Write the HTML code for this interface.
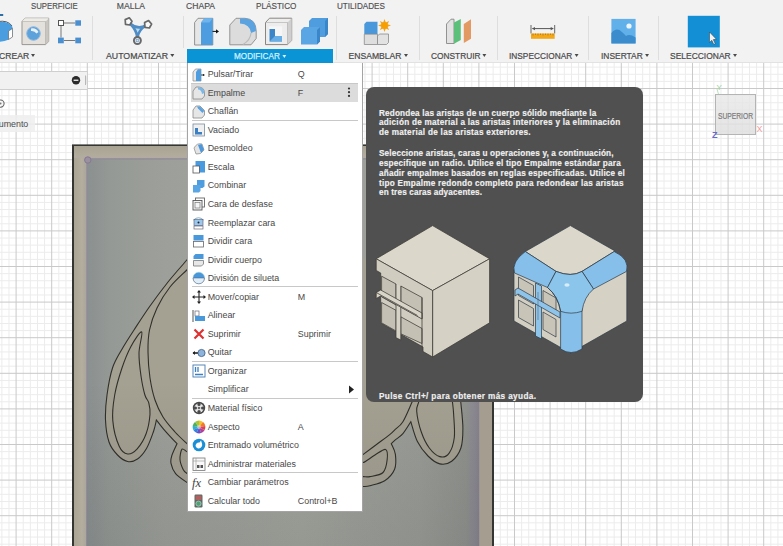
<!DOCTYPE html>
<html><head><meta charset="utf-8">
<style>
*{margin:0;padding:0;box-sizing:border-box}
html,body{width:783px;height:546px;overflow:hidden;background:#fff;font-family:"Liberation Sans",sans-serif}
.abs{position:absolute}
svg{position:absolute;overflow:visible}
#tb{position:absolute;left:0;top:0;width:783px;height:63px;background:#f2f2f2;border-bottom:1px solid #e2e2e2}
.tab{position:absolute;top:1.5px;font-size:8.6px;color:#505050;-webkit-text-stroke:.15px #505050;line-height:9px;white-space:nowrap}
.lbl{position:absolute;top:51.5px;font-size:8.6px;color:#4a4a4a;-webkit-text-stroke:.2px #4a4a4a;line-height:9px;white-space:nowrap}
.dd{display:inline-block;width:0;height:0;border-left:2.6px solid transparent;border-right:2.6px solid transparent;border-top:3.8px solid currentColor;margin-left:2.4px;vertical-align:1.4px}
.sep{position:absolute;top:16px;width:1px;height:44px;background:#dedede}
#mbar{position:absolute;left:187px;top:48.6px;width:146px;height:14.4px;background:#0a94d6}
#menu{position:absolute;left:187px;top:63px;width:176px;height:449px;background:#fff;border:1px solid #a4a4a4;border-top:none}
.row{position:absolute;left:0;width:173px;height:18.54px;font-size:8.9px;color:#484848;white-space:nowrap}
.row .t{position:absolute;left:19.7px;top:4.75px;line-height:10px}
.row .k{position:absolute;left:109.8px;top:4.75px;line-height:10px}
.row .i{position:absolute;left:4px;top:3px;width:13px;height:13px}
.msep{position:absolute;left:4px;width:166px;height:1px;background:#c8c8c8}
#tip{position:absolute;left:366.3px;top:87.3px;width:277px;height:314.5px;background:#505050;border-radius:8px}
.tl{position:absolute;left:12.7px;font-size:8.2px;font-weight:bold;color:#f0f0f0;-webkit-text-stroke:.15px #f0f0f0;white-space:nowrap;line-height:10px}
</style></head><body>
<svg width="783" height="546" style="left:0;top:0">
<path d="M1.86 0V546M8.98 0V546M23.22 0V546M30.34 0V546M37.46 0V546M44.58 0V546M58.82 0V546M65.94 0V546M73.06 0V546M80.18 0V546M94.42 0V546M101.54 0V546M108.66 0V546M115.78 0V546M130.02 0V546M137.14 0V546M144.26 0V546M151.38 0V546M165.62 0V546M172.74 0V546M179.86 0V546M186.98 0V546M201.22 0V546M208.34 0V546M215.46 0V546M222.58 0V546M236.82 0V546M243.94 0V546M251.06 0V546M258.18 0V546M272.42 0V546M279.54 0V546M286.66 0V546M293.78 0V546M308.02 0V546M315.14 0V546M322.26 0V546M329.38 0V546M343.62 0V546M350.74 0V546M357.86 0V546M364.98 0V546M379.22 0V546M386.34 0V546M393.46 0V546M400.58 0V546M414.82 0V546M421.94 0V546M429.06 0V546M436.18 0V546M450.42 0V546M457.54 0V546M464.66 0V546M471.78 0V546M486.02 0V546M493.14 0V546M500.26 0V546M507.38 0V546M521.62 0V546M528.74 0V546M535.86 0V546M542.98 0V546M557.22 0V546M564.34 0V546M571.46 0V546M578.58 0V546M592.82 0V546M599.94 0V546M607.06 0V546M614.18 0V546M628.42 0V546M635.54 0V546M642.66 0V546M649.78 0V546M664.02 0V546M671.14 0V546M678.26 0V546M685.38 0V546M699.62 0V546M706.74 0V546M713.86 0V546M720.98 0V546M735.22 0V546M742.34 0V546M749.46 0V546M756.58 0V546M770.82 0V546M777.94 0V546M785.06 0V546M0 3.06H783M0 10.18H783M0 24.42H783M0 31.54H783M0 38.66H783M0 45.78H783M0 60.02H783M0 67.14H783M0 74.26H783M0 81.38H783M0 95.62H783M0 102.74H783M0 109.86H783M0 116.98H783M0 131.22H783M0 138.34H783M0 145.46H783M0 152.58H783M0 166.82H783M0 173.94H783M0 181.06H783M0 188.18H783M0 202.42H783M0 209.54H783M0 216.66H783M0 223.78H783M0 238.02H783M0 245.14H783M0 252.26H783M0 259.38H783M0 273.62H783M0 280.74H783M0 287.86H783M0 294.98H783M0 309.22H783M0 316.34H783M0 323.46H783M0 330.58H783M0 344.82H783M0 351.94H783M0 359.06H783M0 366.18H783M0 380.42H783M0 387.54H783M0 394.66H783M0 401.78H783M0 416.02H783M0 423.14H783M0 430.26H783M0 437.38H783M0 451.62H783M0 458.74H783M0 465.86H783M0 472.98H783M0 487.22H783M0 494.34H783M0 501.46H783M0 508.58H783M0 522.82H783M0 529.94H783M0 537.06H783M0 544.18H783" stroke="#ececec" stroke-width="1"/>
<path d="M16.1 0V546M51.7 0V546M87.3 0V546M122.9 0V546M158.5 0V546M194.1 0V546M229.7 0V546M265.3 0V546M300.9 0V546M336.5 0V546M372.1 0V546M407.7 0V546M443.3 0V546M478.9 0V546M514.5 0V546M550.1 0V546M585.7 0V546M621.3 0V546M656.9 0V546M692.5 0V546M728.1 0V546M763.7 0V546M0 17.3H783M0 52.9H783M0 88.5H783M0 124.1H783M0 159.7H783M0 195.3H783M0 230.9H783M0 266.5H783M0 302.1H783M0 337.7H783M0 373.3H783M0 408.9H783M0 444.5H783M0 480.1H783M0 515.7H783" stroke="#c9c9c9" stroke-width="1"/>
</svg>
<!-- block -->
<svg width="783" height="546" style="left:0;top:0">
<defs>
 <linearGradient id="fh" x1="86" y1="0" x2="480" y2="0" gradientUnits="userSpaceOnUse">
  <stop offset="0" stop-color="#8a8f90"/>
  <stop offset=".06" stop-color="#959995"/>
  <stop offset=".2" stop-color="#9da09a"/>
  <stop offset=".55" stop-color="#a2a59d"/>
  <stop offset=".85" stop-color="#999c96"/>
  <stop offset=".965" stop-color="#8f928d"/>
  <stop offset=".982" stop-color="#8c8a91"/>
  <stop offset="1" stop-color="#85818e"/>
 </linearGradient>
 <linearGradient id="fl" x1="74" y1="0" x2="87" y2="0" gradientUnits="userSpaceOnUse">
  <stop offset="0" stop-color="#a9a494"/><stop offset=".6" stop-color="#b3ae9e"/><stop offset="1" stop-color="#aaa49c"/>
 </linearGradient>
 <linearGradient id="ft" x1="0" y1="146" x2="0" y2="159" gradientUnits="userSpaceOnUse">
  <stop offset="0" stop-color="#a8a392"/><stop offset=".7" stop-color="#b0ab9b"/><stop offset="1" stop-color="#b4aaa6"/>
 </linearGradient>
</defs>
<rect x="72" y="144.4" width="422" height="410" fill="#353532"/>
<rect x="74" y="146" width="418" height="410" fill="url(#ft)"/>
<rect x="74" y="158" width="13" height="400" fill="url(#fl)"/>
<rect x="479.3" y="158" width="12.7" height="400" fill="#a69d91"/>
<rect x="86.3" y="158.2" width="393" height="400" fill="#8f8c97"/>
<rect x="87.6" y="159.6" width="391.5" height="400" fill="url(#fh)"/>
<circle cx="87.8" cy="160" r="3.2" fill="#9a90a0" stroke="#857a92" stroke-width="1"/>
</svg>
<!--BLOCKSVG-->
<svg width="783" height="546" style="left:0;top:0">
<defs><clipPath id="face"><rect x="86.6" y="159" width="392.7" height="400"/></clipPath></defs>
<g clip-path="url(#face)">
<path d="M192.0 253.0C191.1 254.2 190.8 255.2 186.8 260.0C182.8 264.8 174.1 274.3 168.0 282.0C161.9 289.7 155.7 298.0 150.0 306.0C144.3 314.0 138.7 322.8 134.0 330.0C129.3 337.2 125.4 343.2 121.8 349.5C118.2 355.8 115.0 360.4 112.5 368.0C110.0 375.6 108.2 386.3 107.0 395.0C105.8 403.7 105.2 412.2 105.5 420.0C105.8 427.8 107.0 436.2 109.0 442.0C111.0 447.8 114.4 451.8 117.5 455.0C120.6 458.2 124.3 460.8 127.6 461.5C130.9 462.2 134.3 461.2 137.5 459.0C140.7 456.8 143.8 453.1 146.5 448.5C149.2 443.9 151.8 436.2 153.5 431.5C155.2 426.8 155.9 421.9 156.4 420.0C157.7 421.6 160.6 425.7 164.0 429.6C167.4 433.6 174.8 441.4 177.0 443.7C176.1 445.7 172.8 452.3 171.8 455.6C170.8 458.9 170.4 460.3 171.0 463.3C171.6 466.3 172.9 470.4 175.6 473.6C178.3 476.8 184.5 480.7 187.2 482.6C189.9 484.5 191.2 484.6 192.0 485.0L300 495 L358 487C358.9 486.9 361.3 486.7 363.3 486.5C365.3 486.3 366.3 486.7 369.9 485.7C373.5 484.7 380.6 483.4 384.7 480.7C388.8 477.9 392.8 473.6 394.6 469.2C396.4 464.8 395.9 458.6 395.4 454.4C394.8 450.1 392.0 445.5 391.3 443.7C391.9 443.1 393.1 441.9 395.0 440.2C396.9 438.5 400.3 436.7 402.9 433.6C405.5 430.5 409.5 423.7 410.8 421.7C411.9 425.0 414.5 435.8 417.4 441.5C420.3 447.2 424.3 452.3 428.0 456.0C431.7 459.7 435.9 463.0 439.8 463.9C443.8 464.8 448.2 463.8 451.7 461.2C455.2 458.6 459.0 453.5 460.9 448.0C462.8 442.5 462.9 435.8 462.9 428.3C462.9 420.9 461.4 408.7 460.9 403.3C460.4 397.9 460.1 397.2 460.0 396.0L460 300 L300 230 L200 240Z" fill="#a4a092"/>
<g fill="none" stroke="#30302b" stroke-width="1.1">
<path d="M192.0 253.0C191.1 254.2 190.8 255.2 186.8 260.0C182.8 264.8 174.1 274.3 168.0 282.0C161.9 289.7 155.7 298.0 150.0 306.0C144.3 314.0 138.7 322.8 134.0 330.0C129.3 337.2 125.4 343.2 121.8 349.5C118.2 355.8 115.0 360.4 112.5 368.0C110.0 375.6 108.2 386.3 107.0 395.0C105.8 403.7 105.2 412.2 105.5 420.0C105.8 427.8 107.0 436.2 109.0 442.0C111.0 447.8 114.4 451.8 117.5 455.0C120.6 458.2 124.3 460.8 127.6 461.5C130.9 462.2 134.3 461.2 137.5 459.0C140.7 456.8 143.8 453.1 146.5 448.5C149.2 443.9 151.8 436.2 153.5 431.5C155.2 426.8 155.9 421.9 156.4 420.0C157.7 421.6 160.6 425.7 164.0 429.6C167.4 433.6 174.8 441.4 177.0 443.7C176.1 445.7 172.8 452.3 171.8 455.6C170.8 458.9 170.4 460.3 171.0 463.3C171.6 466.3 172.9 470.4 175.6 473.6C178.3 476.8 184.5 480.7 187.2 482.6C189.9 484.5 191.2 484.6 192.0 485.0"/>
<path d="M192.0 265.0C191.1 265.8 190.5 266.3 186.8 270.0C183.1 273.7 175.0 280.7 170.0 287.0C165.0 293.3 160.4 300.8 157.0 308.0C153.6 315.2 151.0 322.7 149.5 330.0C148.0 337.3 147.9 344.0 148.0 352.0C148.1 360.0 148.8 370.0 150.0 378.0C151.2 386.0 152.8 393.5 155.0 400.0C157.2 406.5 159.7 411.7 163.0 417.0C166.3 422.3 170.8 427.3 175.0 432.0C179.2 436.7 185.7 442.3 188.5 445.0C191.3 447.7 191.4 447.5 192.0 448.0"/>
<path d="M141.7 332.0C140.3 330.9 134.1 340.6 130.8 346.7C127.5 352.8 124.5 360.4 121.8 368.5C119.1 376.6 116.2 386.3 114.7 395.0C113.2 403.7 112.0 412.1 112.8 420.6C113.5 429.2 116.7 440.7 119.2 446.3C121.7 451.9 124.6 453.6 127.6 454.0C130.6 454.4 134.1 452.2 137.2 448.8C140.3 445.4 144.1 439.3 146.2 433.5C148.3 427.7 149.6 419.3 150.0 414.2C150.4 409.1 149.5 405.9 148.7 402.7C147.8 399.5 146.2 399.4 144.9 395.0C143.6 390.6 142.0 383.0 141.0 376.0C140.0 369.0 138.9 360.3 139.0 353.0C139.1 345.7 143.1 333.1 141.7 332.0Z"/>
<path d="M192.0 452.5C191.2 452.4 188.9 452.4 187.2 451.8C185.5 451.2 183.2 447.9 182.0 449.2C180.8 450.5 179.8 456.1 180.0 459.5C180.2 462.9 182.1 467.3 183.3 469.7C184.5 472.1 185.8 472.7 187.2 473.6C188.6 474.5 191.2 474.8 192.0 475.0"/>
<path d="M414.0 398.0C413.7 398.7 414.0 398.1 412.1 402.0C410.2 405.9 405.8 417.1 402.9 421.7C400.0 426.3 397.2 427.5 395.0 429.6C392.8 431.8 392.8 432.1 389.7 434.6C386.6 437.1 380.9 441.2 376.5 444.5C372.1 447.8 366.4 452.1 363.3 454.4C360.2 456.6 358.9 457.4 358.0 458.0"/>
<path d="M358.0 487.0C358.9 486.9 361.3 486.7 363.3 486.5C365.3 486.3 366.3 486.7 369.9 485.7C373.5 484.7 380.6 483.4 384.7 480.7C388.8 477.9 392.8 473.6 394.6 469.2C396.4 464.8 395.9 458.6 395.4 454.4C394.8 450.1 392.0 445.5 391.3 443.7C391.9 443.1 393.1 441.9 395.0 440.2C396.9 438.5 400.3 436.7 402.9 433.6C405.5 430.5 409.5 423.7 410.8 421.7C411.9 425.0 414.5 435.8 417.4 441.5C420.3 447.2 424.3 452.3 428.0 456.0C431.7 459.7 435.9 463.0 439.8 463.9C443.8 464.8 448.2 463.8 451.7 461.2C455.2 458.6 459.0 453.5 460.9 448.0C462.8 442.5 462.9 435.8 462.9 428.3C462.9 420.9 461.4 408.7 460.9 403.3C460.4 397.9 460.1 397.2 460.0 396.0"/>
<path d="M358.0 462.0C358.9 462.1 360.5 463.8 363.3 462.6C366.1 461.4 371.3 457.2 375.0 455.0C378.7 452.8 383.5 448.7 385.5 449.4C387.5 450.1 387.6 455.4 387.2 459.3C386.8 463.2 385.9 469.6 383.0 472.5C380.1 475.4 373.2 475.9 369.9 476.6C366.6 477.3 365.3 476.6 363.3 476.6C361.3 476.6 358.9 476.6 358.0 476.6"/>
<path d="M418.7 398.0C418.7 398.7 419.0 399.8 418.7 402.0C418.4 404.2 416.2 406.1 416.7 411.2C417.1 416.2 419.3 426.2 421.4 432.3C423.5 438.4 426.2 443.9 429.3 448.0C432.4 452.1 436.5 455.7 439.8 456.6C443.1 457.5 446.6 456.5 449.0 453.3C451.4 450.1 453.5 444.1 454.3 437.5C455.1 430.9 453.9 419.9 453.6 413.8C453.3 407.7 452.6 403.6 452.3 400.6C452.0 397.6 452.1 396.8 452.0 396.0"/>
</g></g></svg>
<svg width="783" height="546" style="left:0;top:0"><defs><linearGradient id="vg" x1="0" y1="380" x2="0" y2="546" gradientUnits="userSpaceOnUse"><stop offset="0" stop-color="#000" stop-opacity="0"/><stop offset="1" stop-color="#1a1f22" stop-opacity=".09"/></linearGradient></defs><rect x="86.3" y="380" width="393" height="166" fill="url(#vg)"/></svg>
<!--/BLOCKSVG-->


<!-- left browser panel -->
<div class="abs" style="left:-2px;top:70.5px;width:90px;height:19.5px;background:#f1f1f1;border:1px solid #cfcfcf"></div>
<svg width="100" height="60" style="left:0;top:70">
 <circle cx="76" cy="10.2" r="4.2" fill="#2a2a2a"/>
 <rect x="73.6" y="9.6" width="4.8" height="1.3" fill="#f1f1f1"/>
 <path d="M85.5 5.5 V15" stroke="#aaa" stroke-width=".8"/>
 <path d="M87 6.5 V14" stroke="#ccc" stroke-width=".6"/>
 <circle cx="0.5" cy="33.6" r="3.6" fill="none" stroke="#666" stroke-width="1.1"/>
 <circle cx="0.5" cy="33.6" r="1" fill="#777"/>
</svg>
<div class="abs" style="left:0;top:115px;width:35px;height:17px;background:rgba(238,238,238,.85)"></div>
<div class="abs" style="left:-1.3px;top:118.8px;font-size:8.9px;line-height:10px;color:#4c4c4c;white-space:nowrap">umento</div>
<!-- view cube -->
<div class="abs" style="left:715.4px;top:94.2px;width:40.4px;height:40.4px;background:linear-gradient(rgba(232,232,232,.82),rgba(222,222,222,.82));border:1.5px solid #b4b4b4"></div>
<div class="abs" style="left:718.4px;top:110.8px;font-size:8.6px;line-height:10px;color:#7c7c7c;-webkit-text-stroke:.2px #7c7c7c;white-space:nowrap;transform:scaleX(.78);transform-origin:0 0">SUPERIOR</div>
<svg width="70" height="60" style="left:705;top:80">
 <path d="M12 9 L13.5 14.2" stroke="#a8dca8" stroke-width=".8"/>
 <text x="11.5" y="9.5" font-size="8" fill="#9ad49a" font-family="Liberation Sans">Y</text>
 <text x="7" y="58" font-size="9" font-weight="bold" fill="#6a6ac8" font-family="Liberation Sans">Z</text>
 <text x="51.5" y="52" font-size="9" fill="#f0a0a0" font-family="Liberation Sans">X</text>
</svg>
<div id="tb">
<div class="tab" style="left:30.8px;transform:scaleX(.906);transform-origin:0 0">SUPERFICIE</div>
<div class="tab" style="left:116.8px">MALLA</div>
<div class="tab" style="left:186px">CHAPA</div>
<div class="tab" style="left:255.5px;transform:scaleX(.95);transform-origin:0 0">PLÁSTICO</div>
<div class="tab" style="left:336.7px;transform:scaleX(.946);transform-origin:0 0">UTILIDADES</div>
<div class="sep" style="left:92px"></div>
<div class="sep" style="left:183px;height:32px"></div>
<div class="sep" style="left:336px"></div>
<div class="sep" style="left:419px"></div>
<div class="sep" style="left:497px"></div>
<div class="sep" style="left:588px"></div>
<div class="sep" style="left:658px"></div>
<div class="lbl" style="left:-1px">CREAR<i class="dd"></i></div>
<div class="lbl" style="left:105.9px;transform:scaleX(1.02);transform-origin:0 0">AUTOMATIZAR<i class="dd"></i></div>
<div class="lbl" style="left:348.5px">ENSAMBLAR<i class="dd"></i></div>
<div class="lbl" style="left:430.6px;transform:scaleX(.97);transform-origin:0 0">CONSTRUIR<i class="dd"></i></div>
<div class="lbl" style="left:509px;transform:scaleX(.966);transform-origin:0 0">INSPECCIONAR<i class="dd"></i></div>
<div class="lbl" style="left:601px;transform:scaleX(.98);transform-origin:0 0">INSERTAR<i class="dd"></i></div>
<div class="lbl" style="left:670px;transform:scaleX(.985);transform-origin:0 0">SELECCIONAR<i class="dd"></i></div>
</div>

<!-- toolbar icons -->
<svg width="783" height="63" style="left:0;top:0">
 <!-- crear partial: cylinder -->
 <path d="M0 15h3.2" stroke="#2f6fa8" stroke-width="2"/>
 <path d="M-2 21.5 Q8 20 12 26" stroke="#555" stroke-width="1" fill="none"/>
 <path d="M-2 22 Q9 21 12.5 27 V36 Q10 41 -2 42 Z" fill="#4a9ee0"/>
 <path d="M8.5 31 L12.5 28.5 V37 L8.5 39.5 Z" fill="#fff" stroke="#555" stroke-width=".6"/>
 <!-- hole cube -->
 <path d="M22 21.5 L25 18.2 H48.7 V41.5 L45.5 44.6 H22 Z" fill="#e4e1dc" stroke="#9a9590" stroke-width="1"/>
 <path d="M45.5 21.5 L48.7 18.2 V41.5 L45.5 44.6 Z" fill="#c9c6c1"/>
 <path d="M22 21.5 L25 18.2 H48.7 L45.5 21.5 Z" fill="#eeece8"/>
 <path d="M22 21.5 H45.5 V44.6" stroke="#b0aca6" stroke-width=".6" fill="none"/>
 <circle cx="33.5" cy="33.5" r="6.8" fill="#5ea2dc" stroke="#8fb8dc" stroke-width="1"/>
 <path d="M31 28.5 Q36 27.5 38.5 32 L36.5 33.5 Q34.5 30.5 31 31 Z" fill="#e8f1f8"/>
 <!-- sketch -->
 <path d="M64 23 H75.3 M61 25.5 V37.6 M64 40.5 H75.3" stroke="#777" stroke-width="1"/>
 <rect x="58.5" y="20.5" width="5" height="5" fill="#fff" stroke="#555" stroke-width="1"/>
 <rect x="75.3" y="20.3" width="5.7" height="5.4" fill="#4a90d0"/>
 <rect x="58" y="37.6" width="5.8" height="5.7" fill="#4a90d0"/>
 <rect x="75.3" y="37.6" width="5.7" height="5.7" fill="#4a90d0"/>
 <!-- automatizar -->
 <path d="M130 23.5 Q137.5 30 146 25.5 Q138.5 30 137.4 37.5 Q136.5 30 130 23.5 Z" fill="#b9dcf5" stroke="#4f8cc4" stroke-width="2.6" stroke-linejoin="round"/>
 <path d="M125.2 19.6 L129.3 17.8 L132 21.2 L129.8 25 L125.5 24.4 Z" fill="#fafafa" stroke="#686868" stroke-width="1.7" stroke-linejoin="round"/>
 <path d="M144.6 22.6 L148.6 20.6 L151.6 24 L149.4 28 L145 27.4 Z" fill="#fafafa" stroke="#686868" stroke-width="1.7" stroke-linejoin="round"/>
 <circle cx="137.4" cy="40.5" r="3.5" fill="#d3e4f3" stroke="#686868" stroke-width="1.9"/>
 <rect x="136.2" y="39.3" width="2.4" height="2.4" fill="none" stroke="#7a9ab8" stroke-width=".6"/>
 <!-- push pull -->
 <path d="M194.6 22.5 L198 18.3 H212.8 V45 H194.6 Z" fill="#e6e6e6" stroke="#888" stroke-width=".9"/>
 <path d="M201 22.5 L204.5 18.3 H212.8 V45 H201 Z" fill="#4d9de0"/>
 <path d="M201 22.5 L204.5 18.3 H212.8 L209.5 22.5Z" fill="#6fb4ea"/>
 <path d="M212.5 31.4 H217" stroke="#111" stroke-width="1"/>
 <path d="M216 29.2 L219 31.4 L216 33.6 Z" fill="#111"/>
 <!-- fillet -->
 <path d="M229.8 25 L236 18.3 H245 Q256 19 256.2 31 V38.5 L251 44.8 H229.8 Z" fill="#dcdcdc" stroke="#8a8a8a" stroke-width=".9"/>
 <path d="M240 18.6 H245 Q256 19 256 31 L251 33 Q250 24 240 23.5 Z" fill="#5aa3e0"/>
 <path d="M251 33 Q250.5 40 243 44.5" stroke="#bbb" stroke-width="1.2" fill="none"/>
 <!-- shell -->
 <path d="M265.5 22.5 L269.5 18.2 H291.7 V40.5 L287.5 44.6 H265.5 Z" fill="#ededed" stroke="#8a8580" stroke-width="1"/>
 <path d="M287.5 22.5 L291.7 18.2 V40.5 L287.5 44.6 Z" fill="#cfcfcf"/>
 <path d="M265.5 22.5 H287.5 V44.6" stroke="#aaa" stroke-width=".6" fill="none"/>
 <rect x="268.7" y="26.3" width="13.5" height="15.5" fill="#f6f6f6"/>
 <path d="M269.5 29 H275 V36 H282 V41.5 H269.5 Z" fill="#3c86c8"/>
 <path d="M275 36 H282 V41.5 H269.5 Z" fill="#68aee6"/>
 <!-- combine -->
 <path d="M309 21 L312 18 H328 V34 L325 37 H309 Z" fill="#4f9ddf"/>
 <path d="M325 21 L328 18 V34 L325 37 Z" fill="#3a86c8"/>
 <path d="M301 30 L304 27 H320 V41.6 L317 44.6 H301 Z" fill="#5aa6e4"/>
 <path d="M317 30 L320 27 V41.6 L317 44.6 Z" fill="#3a86c8"/>
 <!-- ensamblar -->
 <path d="M364.3 24 L366.5 21.8 H377.5 V34.2 H364.3 Z" fill="#4a98dc"/>
 <path d="M364.3 34.2 H377.5 V44.5 H364.3 Z" fill="#dedede" stroke="#8a8a8a" stroke-width=".8"/>
 <path d="M377.5 36 L379.5 34 H388.5 V42.5 L386.5 44.5 H377.5 Z" fill="#e2e2e2" stroke="#8a8a8a" stroke-width=".8"/>
 <g transform="translate(384.5 25.5)">
  <path d="M0 -6.5 L1.3 -3 L4.6 -4.6 L3 -1.3 L6.5 0 L3 1.3 L4.6 4.6 L1.3 3 L0 6.5 L-1.3 3 L-4.6 4.6 L-3 1.3 L-6.5 0 L-3 -1.3 L-4.6 -4.6 L-1.3 -3 Z" fill="#f3a21a"/>
  <circle r="3.2" fill="#f5a000"/>
 </g>
 <!-- construir -->
 <path d="M446.5 24 L451 19.2 H454 V43.5 H446.5 Z" fill="#e2e2e2" stroke="#888" stroke-width=".9"/>
 <path d="M454 22.5 L460.8 19 V40 L454 43.7 Z" fill="#5cc07a"/>
 <path d="M463.8 24 L471 19.2 V38.8 L463.8 43 Z" fill="#e39a62"/>
 <!-- inspeccionar -->
 <path d="M531 25 V33.5 M554.7 25 V33.5" stroke="#666" stroke-width="1"/>
 <path d="M532.5 28.6 H553.2" stroke="#555" stroke-width="1"/>
 <path d="M532 28.6 L535 27 V30.2 Z M553.7 28.6 L550.7 27 V30.2 Z" fill="#555"/>
 <rect x="531" y="33.5" width="23.7" height="5.3" fill="#f2a818"/>
 <path d="M533 33.5 V35.5 M535.5 33.5 V35 M538 33.5 V35.5 M540.5 33.5 V35 M543 33.5 V35.5 M545.5 33.5 V35 M548 33.5 V35.5 M550.5 33.5 V35 M553 33.5 V35.5" stroke="#b07010" stroke-width=".7"/>
 <!-- insertar -->
 <rect x="611.4" y="18.9" width="24.2" height="24.5" fill="#62b0ea"/>
 <path d="M611.4 43.4 V33 Q615 28 619.5 30 Q623.5 33 626 36 Q629.5 33.5 635.6 37.5 V43.4 Z" fill="#3a8ccd"/>
 <circle cx="629" cy="26" r="2.6" fill="#eef6fc"/>
 <!-- seleccionar -->
 <rect x="687.8" y="15.8" width="32" height="31.6" fill="#138fd5"/>
 <path d="M709.5 32 V42.5 L711.8 40.3 L713.8 44.5 L715.3 43.8 L713.3 39.6 L716.4 39.3 Z" fill="#f2f2f2" stroke="#333" stroke-width=".5"/>
</svg>
<div id="mbar"><div class="lbl" style="left:46.5px;top:3.5px;color:#d4f0fc;-webkit-text-stroke:.25px #d4f0fc;transform:scaleX(.95);transform-origin:0 0">MODIFICAR<i class="dd"></i></div></div>
<div id="menu">
<div class="abs" style="left:3px;top:19.9px;width:167px;height:19.2px;background:#dcdcdc;border-top:1px solid #c8c8c8"></div>
<div class="row" style="top:1.50px"><svg class="i" width="14" height="14" style="left:3.5px;top:3px"><path d="M1 4 L3.5 1 H9 V13 H1 Z" fill="#e8e8e8" stroke="#888" stroke-width=".7"/><path d="M4 4 L6 1.2 H9 V13 H4 Z" fill="#4d9de0"/><path d="M9 7 H11.5" stroke="#222" stroke-width=".8"/><circle cx="11.6" cy="7" r=".9" fill="#222"/></svg><span class="t">Pulsar/Tirar</span><span class="k">Q</span></div>
<div class="row" style="top:20.04px"><svg class="i" width="14" height="14" style="left:3.5px;top:3px"><path d="M1 5 L4 1 H7 Q12.5 1.5 12.5 7 V10 L10 13 H1 Z" fill="#e6e6e6" stroke="#888" stroke-width=".8"/><path d="M6 1.2 H7 Q12.3 1.5 12.3 7 L10 8 Q9.5 3.5 6 3.5Z" fill="#7ab6e6"/></svg><span class="t">Empalme</span><span class="k">F</span></div>
<div class="row" style="top:38.58px"><svg class="i" width="14" height="14" style="left:3.5px;top:3px"><path d="M1 5 L4 1 H8 L12.5 5.5 V10 L10 13 H1 Z" fill="#e6e6e6" stroke="#888" stroke-width=".8"/><path d="M5 1.5 H8 L12.3 5.8 L10.5 8 L6 3.5 Z" fill="#5aa3e0"/></svg><span class="t">Chaflán</span></div>
<div class="row" style="top:57.12px"><svg class="i" width="14" height="14" style="left:3.5px;top:3px"><rect x="1" y="1" width="11.5" height="12" fill="#f0f0f0" stroke="#7a8ca0" stroke-width=".8"/><path d="M3 5 H6 V9 H10 V11.5 H3 Z" fill="#3a80c4"/></svg><span class="t">Vaciado</span></div>
<div class="row" style="top:75.66px"><svg class="i" width="14" height="14" style="left:3.5px;top:3px"><path d="M2 6 Q5 0.5 10 2 L12 8 Q9 13 4 12 Z" fill="#e4e4e4" stroke="#888" stroke-width=".7"/><path d="M6 3 L9.5 2 L12 7.5 L9 11 Z" fill="#4d98dc"/></svg><span class="t">Desmoldeo</span></div>
<div class="row" style="top:94.20px"><svg class="i" width="14" height="14" style="left:3.5px;top:3px"><rect x="3.5" y="1" width="9.5" height="11.5" fill="#4a9ae0"/><rect x="1" y="6" width="6.5" height="7" fill="#fff" stroke="#555" stroke-width=".8"/></svg><span class="t">Escala</span></div>
<div class="row" style="top:112.74px"><svg class="i" width="14" height="14" style="left:3.5px;top:3px"><path d="M5 1 H12.5 V7.5 L10.5 9 H5 Z" fill="#4f9ddf"/><path d="M1 6 H8.5 V12 L7 13.5 H1 Z" fill="#5aa6e4"/></svg><span class="t">Combinar</span></div>
<div class="row" style="top:131.28px"><svg class="i" width="14" height="14" style="left:3.5px;top:3px"><rect x="3.5" y="1" width="9" height="9" fill="none" stroke="#666" stroke-width=".9"/><rect x="1" y="3.5" width="9" height="9.5" fill="#f4f4f4" stroke="#555" stroke-width=".9"/><rect x="3" y="5.5" width="5" height="5.5" fill="none" stroke="#777" stroke-width=".7"/></svg><span class="t">Cara de desfase</span></div>
<div class="row" style="top:149.82px"><svg class="i" width="14" height="14" style="left:3.5px;top:3px"><path d="M1.5 4 Q6.5 -0.5 11.5 4" fill="none" stroke="#7ab" stroke-width=".9"/><rect x="2" y="3.5" width="9" height="6" fill="#9cc8ec" stroke="#557" stroke-width=".6"/><circle cx="6.5" cy="6.5" r="1" fill="#223"/><rect x="2" y="10" width="9" height="3" fill="#fff" stroke="#667" stroke-width=".7"/></svg><span class="t">Reemplazar cara</span></div>
<div class="row" style="top:168.36px"><svg class="i" width="14" height="14" style="left:3.5px;top:3px"><rect x="1.5" y="1" width="10" height="5.5" fill="#4a98dc"/><rect x="1.5" y="7.5" width="10" height="5.5" fill="#fff" stroke="#666" stroke-width=".8"/></svg><span class="t">Dividir cara</span></div>
<div class="row" style="top:186.90px"><svg class="i" width="14" height="14" style="left:3.5px;top:3px"><path d="M1.5 3 L3.5 1 H11.5 V6 H1.5 Z" fill="#4a98dc"/><path d="M1.5 7.5 H11.5 V11 L9.5 13 H1.5 Z" fill="#e8e8e8" stroke="#777" stroke-width=".8"/></svg><span class="t">Dividir cuerpo</span></div>
<div class="row" style="top:205.44px"><svg class="i" width="14" height="14" style="left:3.5px;top:3px"><circle cx="6.8" cy="7" r="5.8" fill="#4a98dc" stroke="#9cc" stroke-width=".5"/><path d="M1 7 H12.5 Q12 12.5 6.8 12.8 Q1.5 12.5 1 7Z" fill="#e0eef8" stroke="#557" stroke-width=".5"/></svg><span class="t">División de silueta</span></div>
<div class="row" style="top:223.98px"><svg class="i" width="14" height="14" style="left:3.5px;top:3px"><path d="M7 1 V13 M1 7 H13" stroke="#222" stroke-width="1.1"/><path d="M7 0 L5 2.5 H9Z M7 14 L5 11.5 H9Z M0 7 L2.5 5 V9Z M14 7 L11.5 5 V9Z" fill="#222"/></svg><span class="t">Mover/copiar</span><span class="k">M</span></div>
<div class="row" style="top:242.52px"><svg class="i" width="14" height="14" style="left:3.5px;top:3px"><path d="M1 1 V13" stroke="#555" stroke-width="1"/><rect x="3" y="2" width="4" height="5" fill="#fff" stroke="#667" stroke-width=".7"/><rect x="3" y="7" width="10" height="5" fill="#4a98dc"/></svg><span class="t">Alinear</span></div>
<div class="row" style="top:261.06px"><svg class="i" width="14" height="14" style="left:3.5px;top:3px"><path d="M2.5 2.5 L11.5 11.5 M11.5 2.5 L2.5 11.5" stroke="#e03030" stroke-width="2.2"/></svg><span class="t">Suprimir</span><span class="k">Suprimir</span></div>
<div class="row" style="top:279.60px"><svg class="i" width="14" height="14" style="left:3.5px;top:3px"><path d="M1 7 H7" stroke="#222" stroke-width="1.6"/><path d="M0.5 7 L3 5 V9Z" fill="#222"/><circle cx="9.5" cy="7" r="3.6" fill="#8fb4dc" stroke="#3a5a80" stroke-width=".8"/></svg><span class="t">Quitar</span></div>
<div class="row" style="top:298.14px"><svg class="i" width="14" height="14" style="left:3.5px;top:3px"><rect x="1" y="1" width="12" height="12" fill="#fff" stroke="#4a7ab0" stroke-width=".9"/><path d="M3.5 3 V8 M6 3 V8 M3 10.5 H11" stroke="#3a80c4" stroke-width="1.3"/></svg><span class="t">Organizar</span></div>
<div class="row" style="top:316.68px"><svg class="i" width="14" height="14" style="left:3.5px;top:3px"></svg><span class="t">Simplificar</span></div>
<div class="row" style="top:335.22px"><svg class="i" width="14" height="14" style="left:3.5px;top:3px"><circle cx="7" cy="7" r="6.2" fill="#4a4a4a"/><circle cx="7" cy="7" r="4.6" fill="#e8e8e8"/><circle cx="7" cy="3.4" r="1.6" fill="#4a4a4a"/><circle cx="7" cy="10.6" r="1.6" fill="#4a4a4a"/><circle cx="3.4" cy="7" r="1.6" fill="#4a4a4a"/><circle cx="10.6" cy="7" r="1.6" fill="#4a4a4a"/><circle cx="7" cy="7" r="1.3" fill="#6a6a6a"/></svg><span class="t">Material físico</span></div>
<div class="row" style="top:353.76px"><svg class="i" width="14" height="14" style="left:3.5px;top:3px"><path d="M7 7L7.00 0.60A6.4 6.4 0 0 1 11.21 2.18Z" fill="#f6c02c"/><path d="M7 7L11.11 2.10A6.4 6.4 0 0 1 13.32 6.01Z" fill="#f07a2a"/><path d="M7 7L13.30 5.89A6.4 6.4 0 0 1 12.48 10.31Z" fill="#e0404a"/><path d="M7 7L12.54 10.20A6.4 6.4 0 0 1 9.07 13.06Z" fill="#b0409a"/><path d="M7 7L9.19 13.01A6.4 6.4 0 0 1 4.69 12.97Z" fill="#6a50c0"/><path d="M7 7L4.81 13.01A6.4 6.4 0 0 1 1.39 10.09Z" fill="#3a80e0"/><path d="M7 7L1.46 10.20A6.4 6.4 0 0 1 0.72 5.76Z" fill="#30b0d0"/><path d="M7 7L0.70 5.89A6.4 6.4 0 0 1 2.99 2.02Z" fill="#50b060"/><path d="M7 7L2.89 2.10A6.4 6.4 0 0 1 7.13 0.60Z" fill="#a0c840"/><circle cx="7" cy="7" r="2.2" fill="#fff" opacity=".35"/></svg><span class="t">Aspecto</span><span class="k">A</span></div>
<div class="row" style="top:372.30px"><svg class="i" width="14" height="14" style="left:3.5px;top:3px"><circle cx="7" cy="7" r="6.3" fill="#1a8fd6"/><path d="M3.5 8 Q4 4 7.5 4.5 L9 2.5 L10 5.5 Q11 9 7 10.5 Q5 11 3.5 8Z" fill="#fff"/></svg><span class="t">Entramado volumétrico</span></div>
<div class="row" style="top:390.84px"><svg class="i" width="14" height="14" style="left:3.5px;top:3px"><rect x="1" y="1" width="12" height="12.5" fill="#fafafa" stroke="#777" stroke-width=".8"/><path d="M1 4 H13 M4 1 V13.5" stroke="#999" stroke-width=".6"/><rect x="5" y="8" width="2.5" height="3" fill="#555"/><rect x="8.5" y="8" width="2.5" height="3" fill="#555"/></svg><span class="t">Administrar materiales</span></div>
<div class="row" style="top:409.38px"><svg class="i" width="14" height="14" style="left:3.5px;top:3px"><text x="0" y="11.5" font-family="Liberation Serif" font-style="italic" font-size="12.5" fill="#444">fx</text></svg><span class="t">Cambiar parámetros</span></div>
<div class="row" style="top:427.92px"><svg class="i" width="14" height="14" style="left:3.5px;top:3px"><rect x="2.5" y="0.5" width="8" height="13" rx="1.2" fill="#5a6a60"/><rect x="3.5" y="1.5" width="6" height="4.5" fill="#b06060"/><circle cx="6.5" cy="9.6" r="2.6" fill="#50a070" stroke="#cde" stroke-width=".6"/></svg><span class="t">Calcular todo</span><span class="k">Control+B</span></div>
<div class="msep" style="top:56.62px"></div>
<div class="msep" style="top:223.48px"></div>
<div class="msep" style="top:297.64px"></div>
<div class="msep" style="top:334.72px"></div>
<div class="msep" style="top:408.88px"></div>
<svg width="10" height="12" style="left:159px;top:24px"><circle cx="2" cy="1.5" r="1.1" fill="#333"/><circle cx="2" cy="5.2" r="1.1" fill="#333"/><circle cx="2" cy="8.9" r="1.1" fill="#333"/></svg>
<svg width="8" height="10" style="left:160px;top:321.5px"><path d="M1 .5 L6 4.5 L1 8.5Z" fill="#222"/></svg>
</div>
<div id="tip">
<div class="tl" id="tl0" style="top:21.50px;letter-spacing:0.157px">Redondea las aristas de un cuerpo sólido mediante la</div>
<div class="tl" id="tl1" style="top:31.20px;letter-spacing:0.250px">adición de material a las aristas interiores y la eliminación</div>
<div class="tl" id="tl2" style="top:41.10px;letter-spacing:0.284px">de material de las aristas exteriores.</div>
<div class="tl" id="tl3" style="top:61.40px;letter-spacing:0.149px">Seleccione aristas, caras u operaciones y, a continuación,</div>
<div class="tl" id="tl4" style="top:71.30px;letter-spacing:0.207px">especifique un radio. Utilice el tipo Empalme estándar para</div>
<div class="tl" id="tl5" style="top:81.40px;letter-spacing:0.190px">añadir empalmes basados en reglas especificadas. Utilice el</div>
<div class="tl" id="tl6" style="top:91.50px;letter-spacing:0.234px">tipo Empalme redondo completo para redondear las aristas</div>
<div class="tl" id="tl7" style="top:101.20px;letter-spacing:0.142px">en tres caras adyacentes.</div>
<div class="tl" id="tl8" style="top:304.80px;letter-spacing:0.371px">Pulse Ctrl+/ para obtener más ayuda.</div>
</div>

<svg width="783" height="546" style="left:0;top:0" stroke-linejoin="round">
<!-- left cube -->
<g stroke="#3c3a36" stroke-width=".75">
 <path d="M432.6 225.6 L489.6 258.8 L432.6 290.6 L376.2 258.8 Z" fill="#dbd7cb"/>
 <path d="M489.6 258.8 V322.8 L432.6 357 V290.6 Z" fill="#d5d1c5"/>
 <path d="M376.2 258.8 L432.6 290.6 V357 L423 351.5 V347 L380.7 323 V273 L376.2 270.4 Z" fill="#d0ccc0"/>
 <path d="M381.6 276.2 L396 284 V305 L381.6 296.8 Z" fill="#c4c0b4"/>
 <path d="M400.8 286 L422 297.5 V318.5 L400.8 307 Z" fill="#c4c0b4"/>
 <path d="M381.6 302.5 L396 310.3 V331 L381.6 322.8 Z" fill="#c4c0b4"/>
 <path d="M400.8 316.8 L422 328.5 V343.5 L400.8 333.8 Z" fill="#c4c0b4"/>
 <path d="M396 284 V337.7 L400.8 340 V286" fill="#d6d2c6"/>
 <path d="M376.2 292.5 L380.7 290 L422 313 V319 L380.7 296 L376.2 298.5 Z" fill="#d8d4c8"/>
 <path d="M376.2 292.5 L417.5 315.5" fill="none"/>
 <path d="M422 297.5 V347" fill="none"/>
</g>
<!-- right cube -->
<g stroke="#2e3a44" stroke-width=".7">
 <path d="M570.4 225.6 L615 251 L582 271.4 Q571.3 277.5 556 271.4 L525.3 251.5 Z" fill="#dbd7cb"/>
 <path d="M626.8 270 V321 L570.4 353 V290 Z" fill="#d5d1c5"/>
 <path d="M514 270 L570.4 290 V353 L514 321 Z" fill="#d3cfc3"/>
 <!-- panes -->
 <path d="M518.5 277 L533.5 285.5 V304 L518.5 295.5 Z" fill="#c8c4b8"/>
 <path d="M518.5 300 L533.5 308.5 V326 L518.5 317.5 Z" fill="#c8c4b8"/>
 <path d="M543 290.5 L556 298 V314 L543 306.5 Z" fill="#c8c4b8"/>
 <path d="M543 312 L556 319.5 V337 L543 329.5 Z" fill="#c8c4b8"/>
 <!-- left face ribs -->
 <path d="M535.5 283 V336 L541.5 339 V286 Z" fill="#8ec3ea"/>
 <path d="M515 290 L518 288 L560 312 V318 L518 294 L515 296 Z" fill="#8ec3ea"/>
 <path d="M538 292 V320" stroke="#555" stroke-width=".5"/>
 <!-- top-left fillet band -->
 <path d="M525.3 251.5 L556 271.4 L547.5 287.5 L514.6 273 Q511 262 525.3 251.5 Z" fill="#86c0ea"/>
 <!-- top-right band -->
 <path d="M614.2 251.5 L582 271.4 L593.5 289 L626.5 271.4 Q630 259 614.2 251.5 Z" fill="#86c0ea"/>
 <!-- vertical band -->
 <path d="M560.6 308 V349 Q571 356 582 349 V308 Z" fill="#86c0ea"/>
 <!-- ball -->
 <path d="M556 271.4 Q571.3 277.5 582 271.4 L593.5 289 Q584 297 582 311.3 Q571 315 560.6 311.3 Q558 296 547.5 287.5 Z" fill="#8cc5ec"/>
 <path d="M547.5 287.5 Q558 296 560.6 311.3" fill="none"/>
 <ellipse cx="567" cy="285" rx="2.6" ry="1.8" fill="#d8ecf8" stroke="none"/>
</g>
</svg>
</body></html>
